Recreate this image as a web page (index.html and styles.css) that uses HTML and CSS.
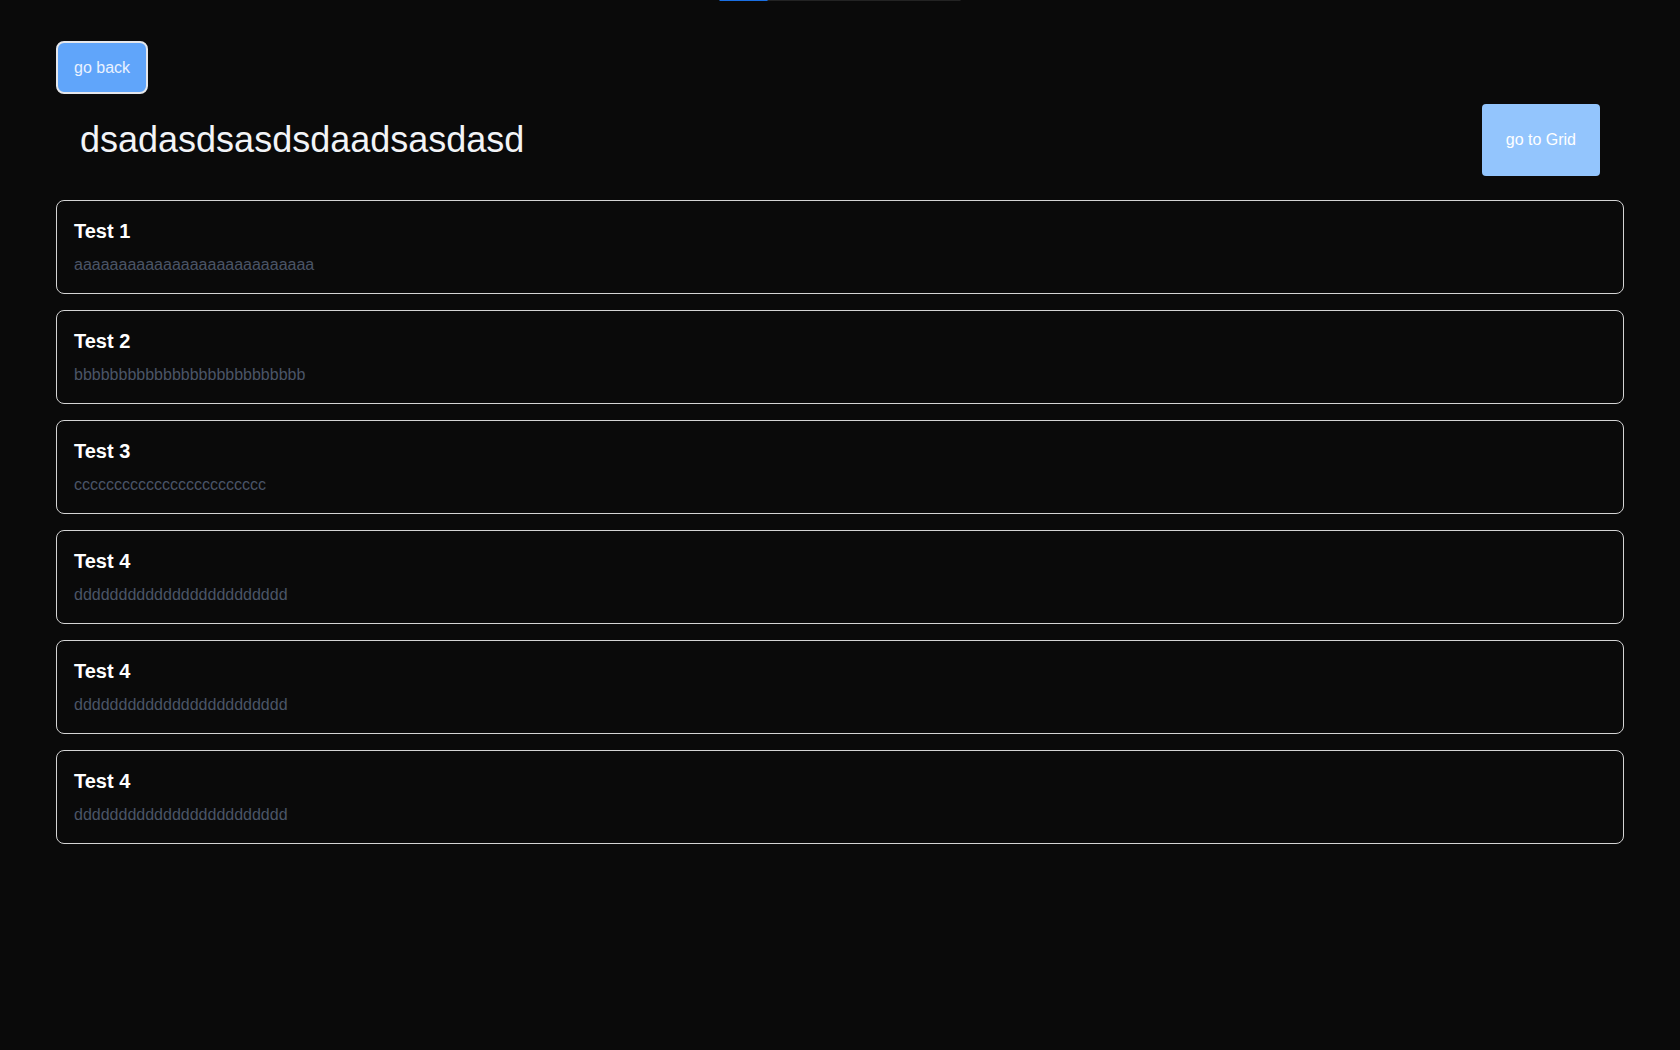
FILE: index.html
```html
<!DOCTYPE html>
<html lang="en">
<head>
<meta charset="utf-8">
<title>dsadasdsasdsdaadsasdasd</title>
<link rel="stylesheet" href="styles.css">
</head>
<body>
<div class="progress"><div class="progress-fill"></div></div>
<main class="page">
  <button class="btn-back" type="button">go back</button>
  <header class="header">
    <h1 class="title">dsadasdsasdsdaadsasdasd</h1>
    <button class="btn-grid" type="button">go to Grid</button>
  </header>
  <ul class="list">
    <li class="card">
      <h3 class="card-title">Test 1</h3>
      <p class="card-desc">aaaaaaaaaaaaaaaaaaaaaaaaaaa</p>
    </li>
    <li class="card">
      <h3 class="card-title">Test 2</h3>
      <p class="card-desc">bbbbbbbbbbbbbbbbbbbbbbbbbb</p>
    </li>
    <li class="card">
      <h3 class="card-title">Test 3</h3>
      <p class="card-desc">cccccccccccccccccccccccc</p>
    </li>
    <li class="card">
      <h3 class="card-title">Test 4</h3>
      <p class="card-desc">dddddddddddddddddddddddd</p>
    </li>
    <li class="card">
      <h3 class="card-title">Test 4</h3>
      <p class="card-desc">dddddddddddddddddddddddd</p>
    </li>
    <li class="card">
      <h3 class="card-title">Test 4</h3>
      <p class="card-desc">dddddddddddddddddddddddd</p>
    </li>
  </ul>
</main>
</body>
</html>
```
FILE: styles.css
```css
html, body {
  margin: 0;
  padding: 0;
  background: #0a0a0a;
  min-height: 100%;
}

body {
  font-family: "Liberation Sans", Arial, sans-serif;
  color: #f5f5f5;
}

.progress {
  position: fixed;
  top: 0;
  left: 50%;
  transform: translateX(-50%);
  width: 241px;
  height: 1px;
  background: #232323;
}

.progress-fill {
  width: 48px;
  height: 100%;
  background: #1a6fe3;
}

.page {
  padding: 41px 56px 40px;
  display: flex;
  flex-direction: column;
  align-items: flex-start;
}

.btn-back {
  font-family: inherit;
  font-size: 16px;
  line-height: 19px;
  color: #eaf2ff;
  background: #60a5fa;
  border: 2px solid #e5e7eb;
  border-radius: 8px;
  padding: 15px 16px;
  cursor: pointer;
}

.header {
  align-self: stretch;
  display: flex;
  align-items: center;
  justify-content: space-between;
  padding: 0 24px;
  margin-top: 10px;
}

.title {
  margin: 0;
  font-size: 36px;
  font-weight: 400;
  color: #f2f4f7;
}

.btn-grid {
  font-family: inherit;
  font-size: 16px;
  color: #ffffff;
  background: #93c5fd;
  border: none;
  border-radius: 4px;
  height: 72px;
  padding: 0 24px;
  cursor: pointer;
}

.list {
  align-self: stretch;
  list-style: none;
  margin: 24px 0 0;
  padding: 0;
  display: flex;
  flex-direction: column;
  gap: 16px;
}

.card {
  border: 1px solid #d4d4d4;
  border-radius: 8px;
  padding: 19px 17px 19px;
  background: #0a0a0a;
}

.card-title {
  margin: 0;
  font-size: 20px;
  font-weight: 700;
  color: #ffffff;
}

.card-desc {
  margin: 13px 0 0;
  font-size: 16px;
  color: #4b5567;
}
```
